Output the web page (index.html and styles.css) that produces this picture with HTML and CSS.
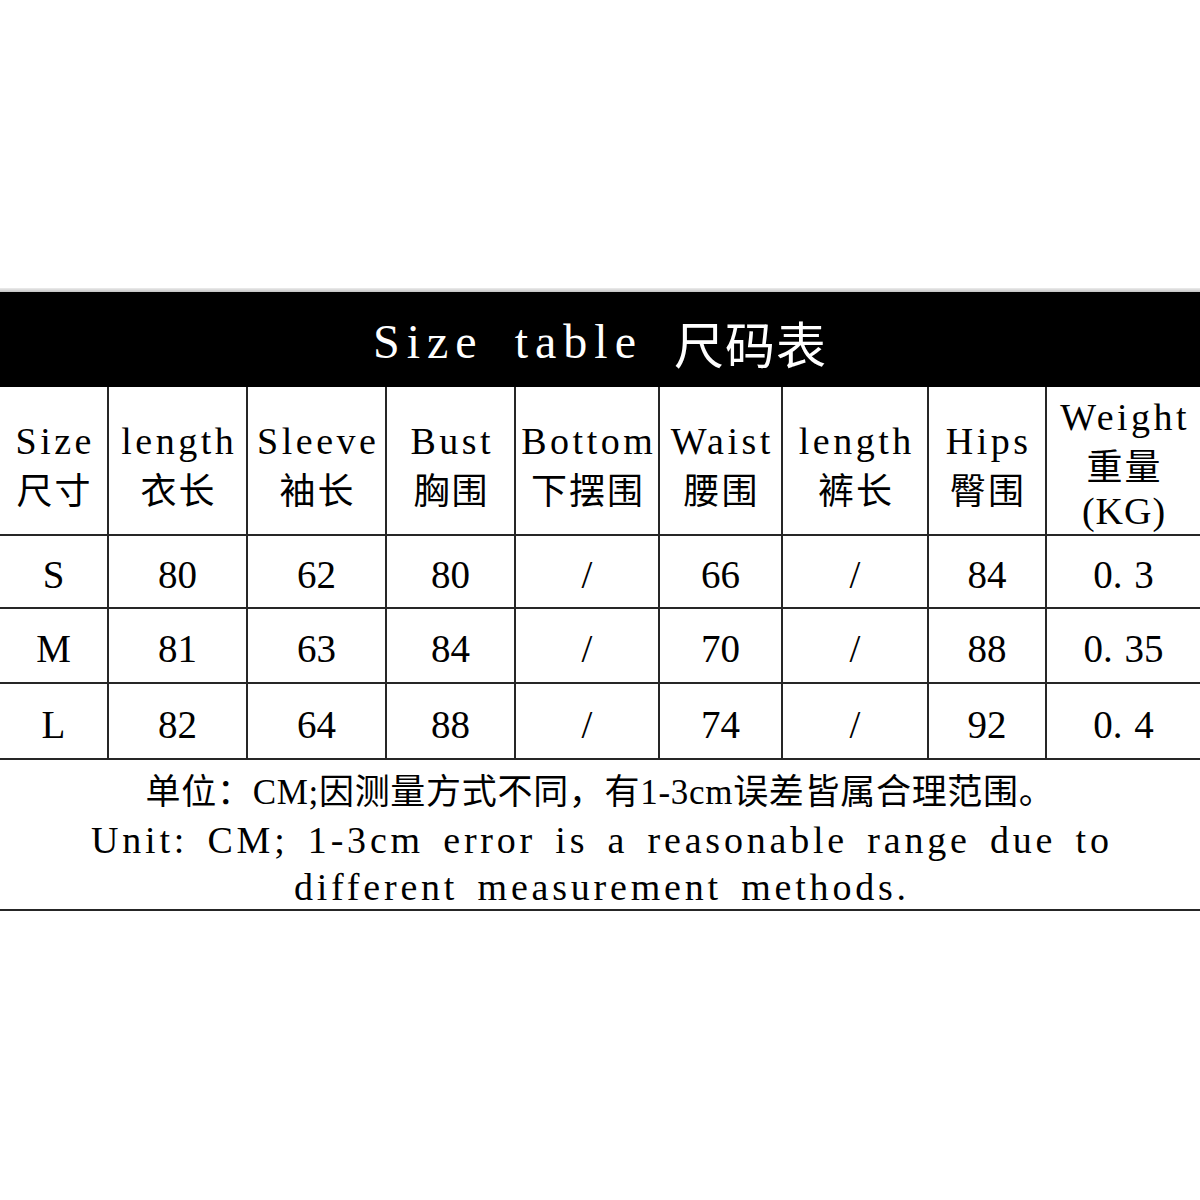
FILE: index.html
```html
<!DOCTYPE html>
<html lang="zh">
<head>
<meta charset="utf-8">
<title>Size table 尺码表</title>
<link rel="stylesheet" href="styles.css">
</head>
<body>
<div class="page">
  <div class="edge"></div>
  <div class="title"><span class="t-en">Size table </span><span class="t-zh">尺码表</span></div>
  <div class="grid">
    <div class="cell head"><span class="en">Size</span><span class="zh">尺寸</span></div>
    <div class="cell head"><span class="en">length</span><span class="zh">衣长</span></div>
    <div class="cell head"><span class="en">Sleeve</span><span class="zh">袖长</span></div>
    <div class="cell head"><span class="en">Bust</span><span class="zh">胸围</span></div>
    <div class="cell head"><span class="en">Bottom</span><span class="zh">下摆围</span></div>
    <div class="cell head"><span class="en">Waist</span><span class="zh">腰围</span></div>
    <div class="cell head"><span class="en">length</span><span class="zh">裤长</span></div>
    <div class="cell head"><span class="en">Hips</span><span class="zh">臀围</span></div>
    <div class="cell head last"><span class="en">Weight</span><span class="zh">重量</span><span class="unit">(KG)</span></div>

    <div class="cell data r1">S</div>
    <div class="cell data r1">80</div>
    <div class="cell data r1">62</div>
    <div class="cell data r1">80</div>
    <div class="cell data r1">/</div>
    <div class="cell data r1">66</div>
    <div class="cell data r1">/</div>
    <div class="cell data r1">84</div>
    <div class="cell data r1 last">0<span class="dot">.</span>3</div>

    <div class="cell data r2">M</div>
    <div class="cell data r2">81</div>
    <div class="cell data r2">63</div>
    <div class="cell data r2">84</div>
    <div class="cell data r2">/</div>
    <div class="cell data r2">70</div>
    <div class="cell data r2">/</div>
    <div class="cell data r2">88</div>
    <div class="cell data r2 last">0<span class="dot">.</span>35</div>

    <div class="cell data r3">L</div>
    <div class="cell data r3">82</div>
    <div class="cell data r3">64</div>
    <div class="cell data r3">88</div>
    <div class="cell data r3">/</div>
    <div class="cell data r3">74</div>
    <div class="cell data r3">/</div>
    <div class="cell data r3">92</div>
    <div class="cell data r3 last">0<span class="dot">.</span>4</div>

    <div class="note">
      <div class="note-line zh-line">单位：CM;因测量方式不同，有1-3cm误差皆属合理范围。</div>
      <div class="note-line en-line">Unit: CM; 1-3cm error is a reasonable range due to</div>
      <div class="note-line en-line">different measurement methods.</div>
    </div>
  </div>
</div>
</body>
</html>
```

FILE: styles.css
```css
* {
  box-sizing: border-box;
}

html, body {
  margin: 0;
  padding: 0;
  background: #ffffff;
}

body {
  font-family: "Liberation Serif", "Noto Sans CJK SC", serif;
  color: #000000;
}

.page {
  width: 1200px;
  padding-top: 288px;
}

.edge {
  height: 4px;
  background: linear-gradient(#ececec, #c4c4c4);
}

.title {
  height: 95px;
  background: #000000;
  color: #ffffff;
  display: flex;
  align-items: center;
  justify-content: center;
  padding-top: 4px;
  white-space: pre;
}

.t-en {
  font-family: "Liberation Serif", serif;
  font-size: 48px;
  letter-spacing: 7px;
  word-spacing: 12px;
}

.t-zh {
  font-family: "Noto Sans CJK SC", sans-serif;
  font-size: 50px;
  letter-spacing: 1px;
}

.grid {
  display: grid;
  grid-template-columns: 109px 139px 139px 129px 144px 123px 146px 118px 153px;
  grid-template-rows: 149px 73px 75px 76px 151px;
}

.cell {
  border-right: 2px solid #262626;
  border-bottom: 2px solid #262626;
  display: flex;
  align-items: center;
  justify-content: center;
  white-space: nowrap;
  overflow: visible;
}

.cell.last {
  border-right: none;
}

.head {
  flex-direction: column;
  padding-top: 8px;
}

.head .en {
  font-family: "Liberation Serif", serif;
  font-size: 38px;
  line-height: 47px;
  letter-spacing: 3.5px;
  margin-right: -3.5px;
}

.head .zh {
  font-family: "Noto Sans CJK SC", sans-serif;
  font-size: 36px;
  line-height: 47px;
  letter-spacing: 2px;
  margin-right: -2px;
}

.head .unit {
  font-family: "Liberation Serif", serif;
  font-size: 38px;
  line-height: 47px;
  letter-spacing: 1px;
  margin-right: -1px;
}

.data {
  font-family: "Liberation Serif", serif;
  font-size: 39px;
  line-height: 1;
  padding-top: 6px;
}

.dot {
  margin-right: 0.3em;
}

.note {
  grid-column: 1 / -1;
  border-bottom: 2px solid #262626;
  padding-top: 9px;
  display: flex;
  flex-direction: column;
  align-items: center;
}

.note-line {
  height: 47.5px;
  line-height: 47.5px;
  white-space: nowrap;
}

.zh-line {
  font-family: "Liberation Serif", "Noto Sans CJK SC", serif;
  font-size: 35px;
  letter-spacing: 0.7px;
}

.en-line {
  font-family: "Liberation Serif", serif;
  font-size: 38px;
  letter-spacing: 3.8px;
  word-spacing: 6px;
  margin-right: -3.8px;
}
```
